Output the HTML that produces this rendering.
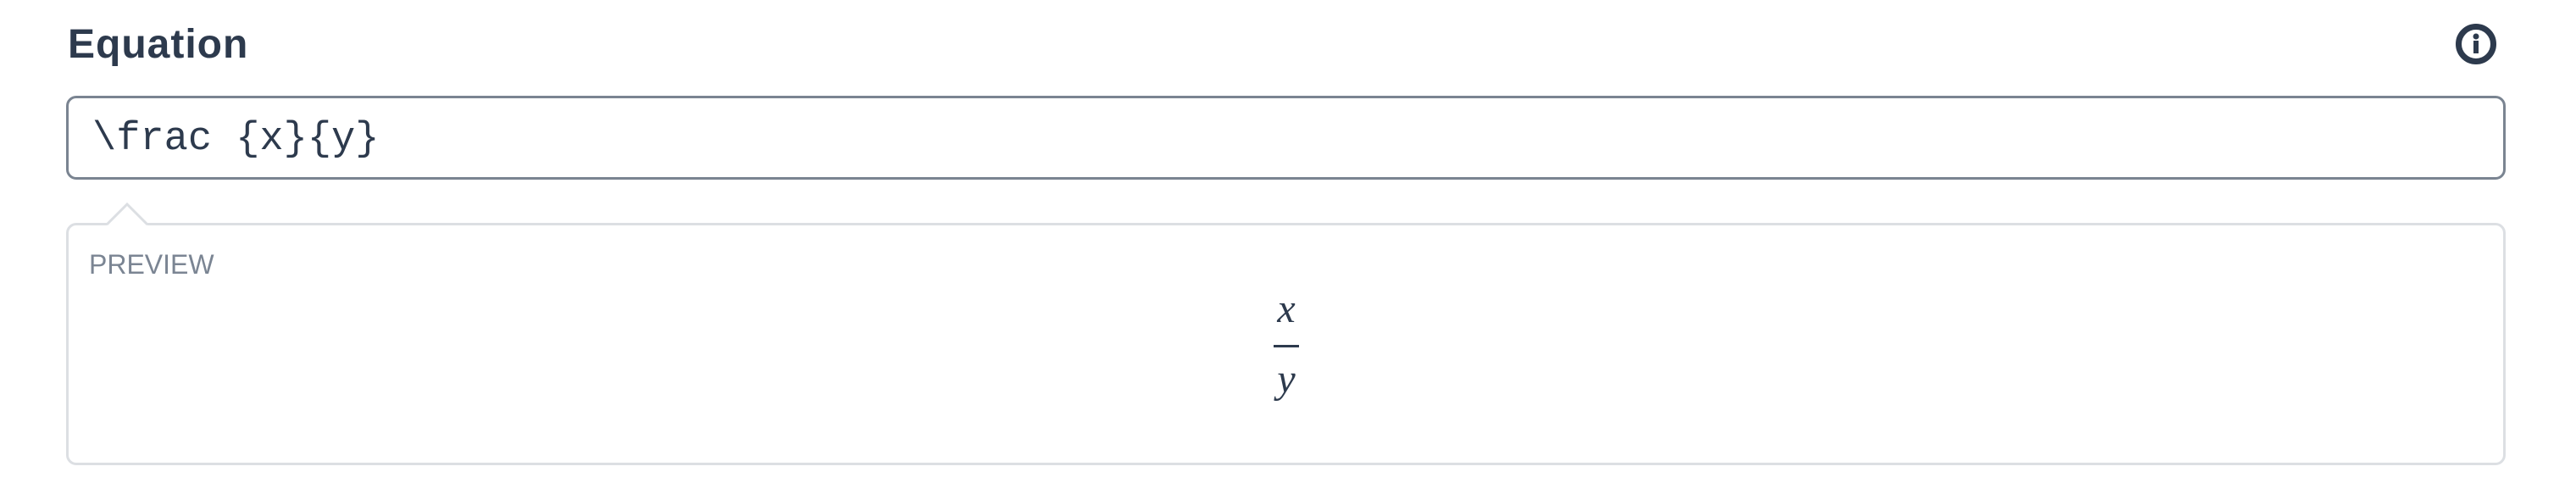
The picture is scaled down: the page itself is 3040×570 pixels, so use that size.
<!DOCTYPE html>
<html><head><meta charset="utf-8"><style>
html,body{margin:0;padding:0;background:#fff;width:3040px;height:570px;overflow:hidden;position:relative;font-family:"Liberation Sans",sans-serif;color:#2d3a4d}
.t{position:absolute;left:80px;top:23px;font-size:48px;font-weight:bold;line-height:60px;letter-spacing:1px}
.inp{position:absolute;left:78px;top:113px;width:2873px;height:93px;border:3px solid #7a8491;border-radius:12px;box-sizing:content-box}
.code{position:absolute;left:28px;top:2px;line-height:93px;font-family:"Liberation Mono",monospace;font-size:47px;color:#2d3a4d}
.pv{position:absolute;left:78px;top:263px;width:2873px;height:280px;border:3px solid #dcdfe3;border-radius:12px}
.lbl{position:absolute;left:24px;top:26px;font-size:32px;color:#7b8593;line-height:40px}
.fr{position:absolute;left:1490px;top:342px;width:56px;text-align:center;font-family:"Liberation Serif",serif;font-style:italic;font-size:48px;line-height:46px}
</style></head><body>
<div class="t">Equation</div>
<svg style="position:absolute;left:2895px;top:25px" width="54" height="54" viewBox="0 0 54 54">
<circle cx="27" cy="27" r="20.5" fill="none" stroke="#2d3a4d" stroke-width="7"/>
<circle cx="27" cy="18" r="3.5" fill="#2d3a4d"/>
<rect x="24" y="23" width="6" height="15" fill="#2d3a4d"/>
</svg>
<div class="inp"><div class="code">\frac {x}{y}</div></div>
<div class="pv"><div class="lbl">PREVIEW</div></div>
<svg style="position:absolute;left:124px;top:238px" width="52" height="30" viewBox="0 0 52 30">
<polygon points="2,28 26,3 50,28" fill="#fff"/>
<polyline points="2,27 26,3 50,27" fill="none" stroke="#dcdfe3" stroke-width="3"/>
</svg>
<div class="fr">x</div>
<div style="position:absolute;left:1503px;top:407px;width:30px;height:3px;background:#2d3a4d"></div>
<div class="fr" style="top:425px">y</div>
</body></html>
